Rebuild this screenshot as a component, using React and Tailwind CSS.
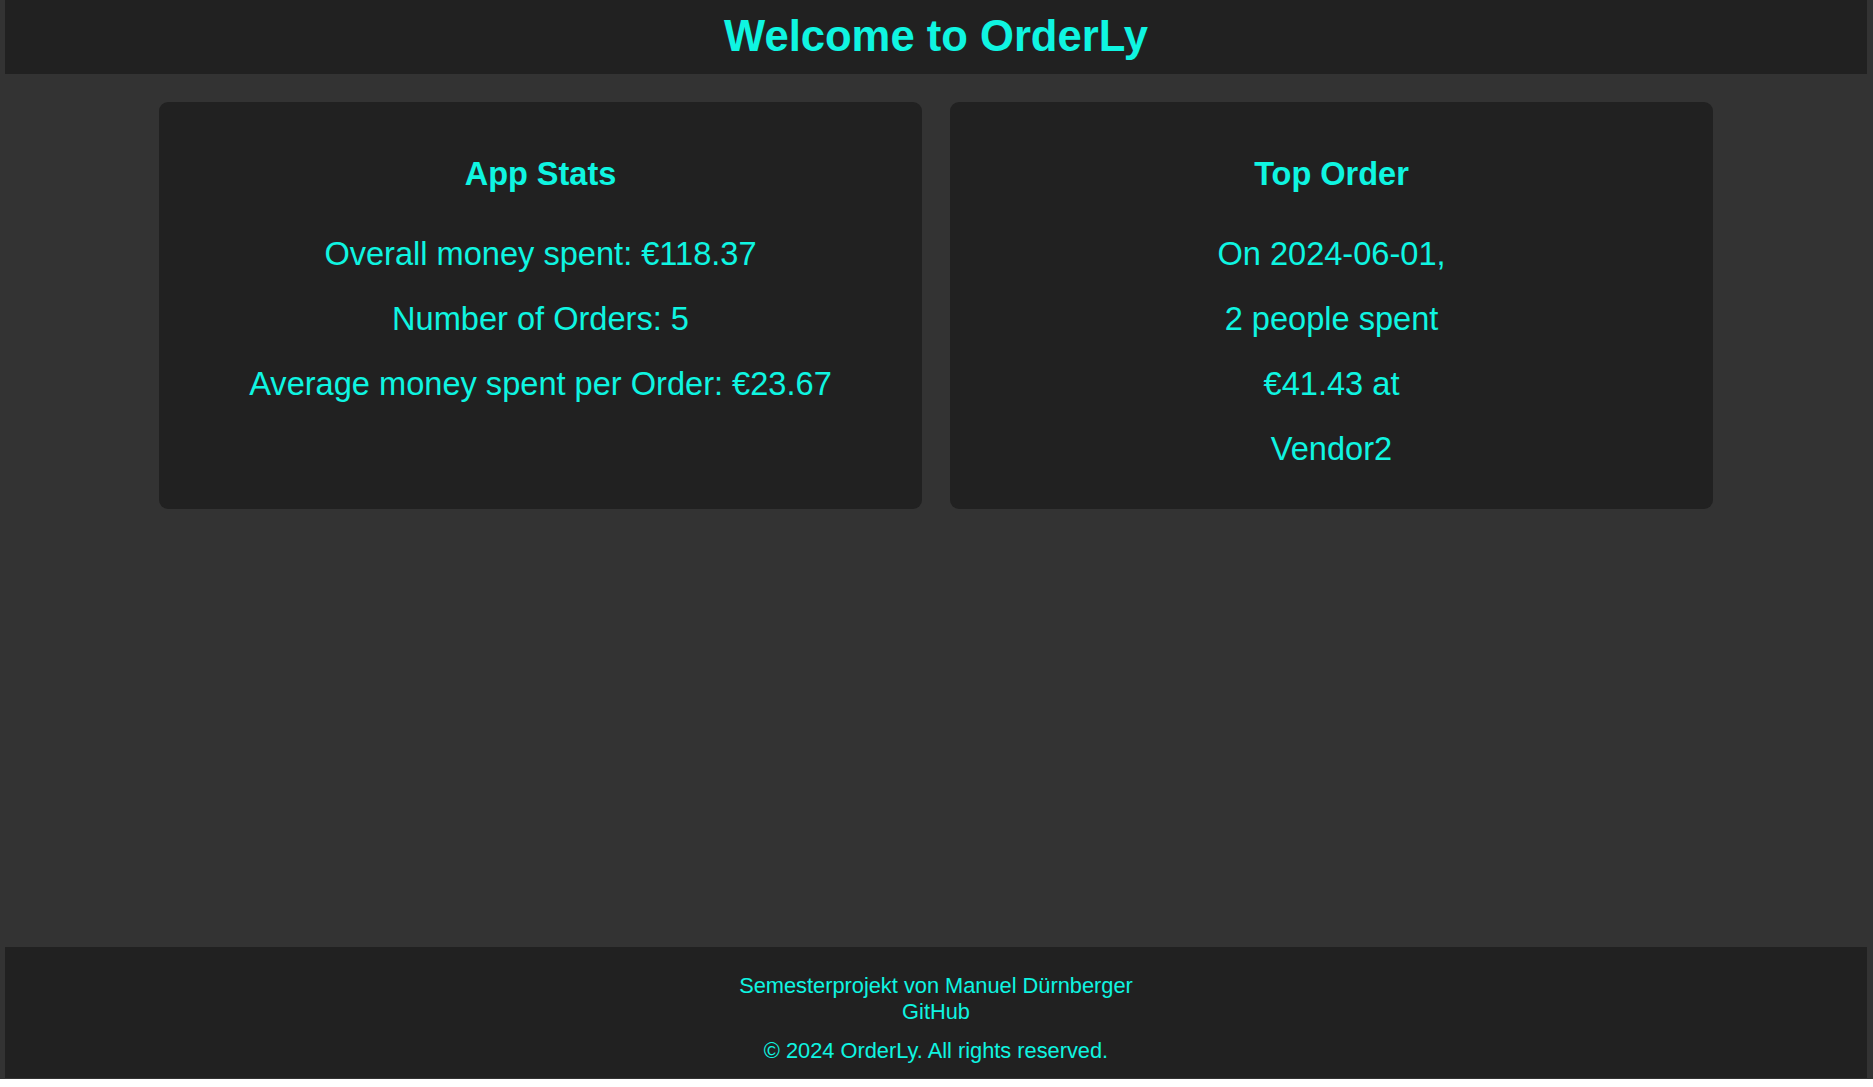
export default function App() {
  const font = { fontFamily: '"Liberation Sans", Arial, Helvetica, sans-serif' };
  return (
    <div
      className="h-[1079px] flex flex-col bg-[#333333] pl-[5px] pr-[6px] text-[#0ff5e1]"
      style={font}
    >
      <header className="h-[74px] shrink-0 bg-[#212121] flex justify-center pt-[11px]">
        <h1 className="text-[43.6px] font-bold leading-[50px]">Welcome to OrderLy</h1>
      </header>

      <main className="flex-1 flex justify-center items-start pt-[28px]">
        <div className="flex gap-[28px] items-stretch">
          <section className="w-[763px] rounded-[9px] bg-[#212121] flex flex-col items-center pt-[54px] pb-[42px]">
            <h2 className="text-[32.5px] font-bold leading-[37px]">App Stats</h2>
            <div className="mt-[42px] flex flex-col items-center gap-[28px] text-[32.6px] leading-[37px]">
              <p>Overall money spent: €118.37</p>
              <p>Number of Orders: 5</p>
              <p>Average money spent per Order: €23.67</p>
            </div>
          </section>
          <section className="w-[763px] rounded-[9px] bg-[#212121] flex flex-col items-center pt-[54px] pb-[42px]">
            <h2 className="text-[32.5px] font-bold leading-[37px]">Top Order</h2>
            <div className="mt-[42px] flex flex-col items-center gap-[28px] text-[32.6px] leading-[37px]">
              <p>On 2024-06-01,</p>
              <p>2 people spent</p>
              <p>€41.43 at</p>
              <p>Vendor2</p>
            </div>
          </section>
        </div>
      </main>

      <footer className="shrink-0 bg-[#212121] flex flex-col items-center pt-[26px] pb-[14px] text-[21.8px] leading-[26px] mb-[1px]">
        <p>Semesterprojekt von Manuel Dürnberger</p>
        <a>GitHub</a>
        <p className="mt-[13px]">© 2024 OrderLy. All rights reserved.</p>
      </footer>
    </div>
  );
}
